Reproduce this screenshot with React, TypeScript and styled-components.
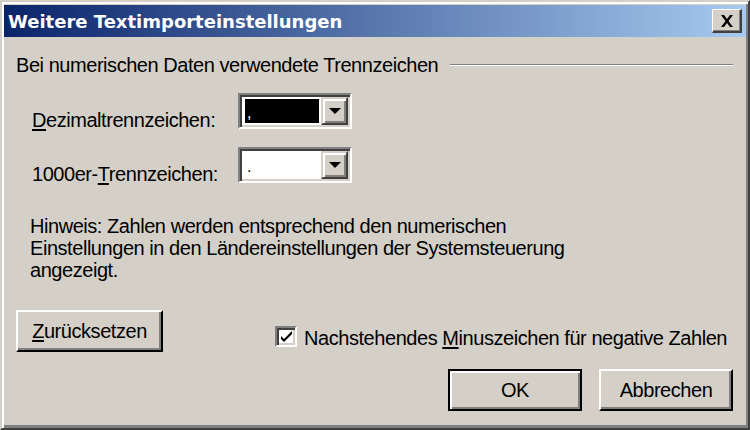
import React from "react";
import styled, { createGlobalStyle } from "styled-components";

const Global = createGlobalStyle`
  html, body { margin: 0; padding: 0; background: #d4d0c8; }
  body { font-family: "Liberation Sans", Arial, sans-serif; }
`;

const Window = styled.div`
  box-sizing: border-box;
  width: 750px;
  height: 430px;
  background: #d4d0c8;
  border-top: 2px solid #d4d0c8;
  border-left: 2px solid #d4d0c8;
  border-right: 2px solid #404040;
  border-bottom: 2px solid #404040;
  box-shadow: inset 2px 2px 0 #ffffff, inset -2px -3px 0 #808080;
  padding: 3px 2px 0 2px;
  display: flex;
  flex-direction: column;
  color: #000;
  font-size: 20px;
  letter-spacing: -0.45px;
`;

const TitleBar = styled.div`
  height: 32px;
  background: linear-gradient(to right, #0a246a 0%, #a6caf0 100%);
  display: flex;
  align-items: center;
  justify-content: space-between;
  padding: 0 4px 0 4px;
`;

const Title = styled.span`
  color: #fff;
  font-family: "DejaVu Sans", Verdana, sans-serif;
  font-weight: bold;
  font-size: 18px;
  letter-spacing: 0;
`;

const CloseButton = styled.div`
  box-sizing: border-box;
  width: 30px;
  height: 24px;
  background: #d4d0c8;
  border-top: 1px solid #fff;
  border-left: 1px solid #fff;
  border-right: 2px solid #404040;
  border-bottom: 2px solid #404040;
  box-shadow: inset -1px -1px 0 #808080;
  display: flex;
  align-items: center;
  justify-content: center;
`;

const Body = styled.div`
  flex: 1;
  display: flex;
  flex-direction: column;
  padding: 18px 0 0 12px;
`;

const GroupHeader = styled.div`
  display: flex;
  align-items: center;
  gap: 12px;
  padding-right: 13px;
  height: 20px;
`;

const GroupLine = styled.div`
  flex: 1;
  height: 0;
  border-top: 1px solid #808080;
  border-bottom: 1px solid #ffffff;
`;

const FieldRow = styled.div<{ $top: number }>`
  display: grid;
  grid-template-columns: 206px 114px;
  align-items: start;
  margin-top: ${(p) => p.$top}px;
  padding-left: 16px;
`;

const Label = styled.span`
  line-height: 22px;
  margin-top: 16px;
`;

const U = styled.span`
  text-decoration: underline;
  text-underline-offset: 2px;
`;

const Combo = styled.div`
  box-sizing: border-box;
  width: 114px;
  height: 36px;
  border-top: 2px solid #808080;
  border-left: 2px solid #808080;
  border-right: 2px solid #fff;
  border-bottom: 2px solid #fff;
  box-shadow: inset 2px 2px 0 #404040, inset -2px -2px 0 #d4d0c8;
  background: #fff;
  display: flex;
  padding: 4px 4px 4px 5px;
`;

const ComboValue = styled.div<{ $selected?: boolean }>`
  flex: 1;
  background: ${(p) => (p.$selected ? "#000" : "#fff")};
  color: ${(p) => (p.$selected ? "#fff" : "#000")};
  font-size: 16px;
  line-height: 1;
  display: flex;
  align-items: flex-end;
  padding-left: 2px;
  padding-bottom: 2px;
  margin-right: 2px;
`;

const ComboButton = styled.div`
  box-sizing: border-box;
  width: 27px;
  background: #d4d0c8;
  border-top: 2px solid #d4d0c8;
  border-left: 2px solid #d4d0c8;
  border-right: 2px solid #404040;
  border-bottom: 2px solid #404040;
  box-shadow: inset 2px 2px 0 #fff, inset -2px -2px 0 #808080;
  display: flex;
  align-items: center;
  justify-content: center;
  margin: -2px -2px -2px 0;
`;

const Hint = styled.p`
  margin: 30px 0 0 14px;
  line-height: 22px;
  width: 580px;
`;

const BottomArea = styled.div`
  display: flex;
  flex-direction: column;
  margin-top: 29px;
`;

const OptionsRow = styled.div`
  display: flex;
  align-items: flex-start;
  justify-content: space-between;
  padding-right: 19px;
`;

const Button = styled.div<{ $default?: boolean; $w: number }>`
  box-sizing: border-box;
  width: ${(p) => p.$w}px;
  height: 42px;
  background: #d4d0c8;
  display: flex;
  align-items: center;
  justify-content: center;
  border-top: 2px solid ${(p) => (p.$default ? "#000" : "#fff")};
  border-left: 2px solid ${(p) => (p.$default ? "#000" : "#fff")};
  border-right: 2px solid #000;
  border-bottom: 2px solid #000;
  box-shadow: ${(p) =>
    p.$default
      ? "inset 2px 2px 0 #fff, inset -2px -2px 0 #808080"
      : "inset -2px -2px 0 #808080"};
`;

const CheckWrap = styled.label`
  display: flex;
  align-items: flex-start;
  gap: 7px;
  margin-top: 16px;
`;

const CheckText = styled.span`
  line-height: 23px;
  margin-top: 1px;
`;

const CheckBox = styled.span`
  box-sizing: border-box;
  width: 22px;
  height: 21px;
  background: #fff;
  border-top: 2px solid #808080;
  border-left: 2px solid #808080;
  border-right: 2px solid #fff;
  border-bottom: 2px solid #fff;
  box-shadow: inset 2px 2px 0 #404040, inset -2px -2px 0 #d4d0c8;
  display: flex;
  align-items: center;
  justify-content: center;
`;

const ActionRow = styled.div`
  display: flex;
  justify-content: flex-end;
  gap: 17px;
  margin-top: 17px;
  padding-right: 13px;
`;

const Arrow = () => (
  <svg width="12" height="6" viewBox="0 0 12 6">
    <path d="M0 0h12L6 6z" fill="#000" />
  </svg>
);

export default function App() {
  return (
    <>
      <Global />
      <Window>
        <TitleBar>
          <Title>Weitere Textimporteinstellungen</Title>
          <CloseButton>
            <svg width="14" height="12" viewBox="0 0 14 12">
              <path d="M1 0h3l3 4 3-4h3l-4.5 6L13 12h-3L7 8l-3 4H1l4.5-6z" fill="#000" />
            </svg>
          </CloseButton>
        </TitleBar>
        <Body>
          <GroupHeader>
            <span>Bei numerischen Daten verwendete Trennzeichen</span>
            <GroupLine />
          </GroupHeader>
          <FieldRow $top={18}>
            <Label>
              <U>D</U>ezimaltrennzeichen:
            </Label>
            <Combo>
              <ComboValue $selected>,</ComboValue>
              <ComboButton>
                <Arrow />
              </ComboButton>
            </Combo>
          </FieldRow>
          <FieldRow $top={16}>
            <Label>
              1000er-<U>T</U>rennzeichen:
            </Label>
            <Combo>
              <ComboValue>.</ComboValue>
              <ComboButton>
                <Arrow />
              </ComboButton>
            </Combo>
          </FieldRow>
          <Hint>
            Hinweis: Zahlen werden entsprechend den numerischen
            <br />
            Einstellungen in den Ländereinstellungen der Systemsteuerung
            <br />
            angezeigt.
          </Hint>
          <BottomArea>
            <OptionsRow>
              <Button $w={147}>
                <span>
                  <U>Z</U>urücksetzen
                </span>
              </Button>
              <CheckWrap>
                <CheckBox>
                  <svg width="13" height="11" viewBox="0 0 13 11">
                    <path d="M1 5l3 3 8-8v3l-8 8-3-3z" fill="#000" />
                  </svg>
                </CheckBox>
                <CheckText>
                  Nachstehendes <U>M</U>inuszeichen für negative Zahlen
                </CheckText>
              </CheckWrap>
            </OptionsRow>
            <ActionRow>
              <Button $w={134} $default>
                OK
              </Button>
              <Button $w={134}>Abbrechen</Button>
            </ActionRow>
          </BottomArea>
        </Body>
      </Window>
    </>
  );
}
